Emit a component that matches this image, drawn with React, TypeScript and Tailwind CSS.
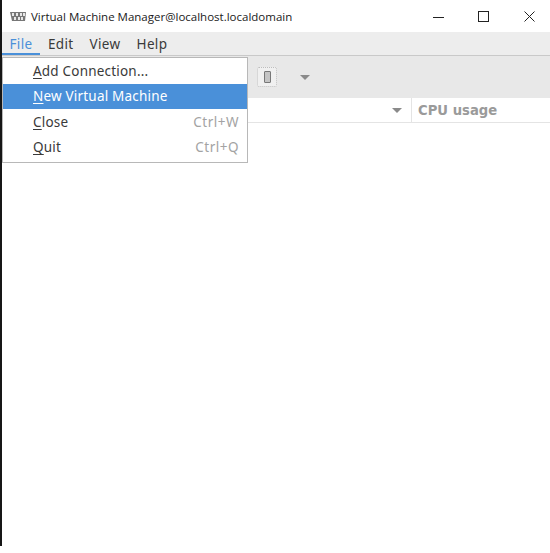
const menus = [
  { label: "File", active: true },
  { label: "Edit" },
  { label: "View" },
  { label: "Help" },
];

const fileItems = [
  { key: "A", rest: "dd Connection...", hint: "" },
  { key: "N", rest: "ew Virtual Machine", hint: "", selected: true },
  { key: "C", rest: "lose", hint: "Ctrl+W" },
  { key: "Q", rest: "uit", hint: "Ctrl+Q" },
];

function AppIcon() {
  return (
    <svg width="16" height="9" viewBox="0 0 16 9">
      <path d="M0 0h16l-1 9H2z" fill="#777" />
      <path d="M2 1h2v3H2zM6 1h2v3H6zM10 1h2v3h-2zM13 1h2v3h-2zM4 5h2v3H4zM8 5h2v3H8zM11 5h2v3h-2z" fill="#e8e8e8" />
    </svg>
  );
}

function WindowControls() {
  return (
    <div className="flex items-center pr-[15px]">
      <svg width="11" height="11" viewBox="0 0 11 11" stroke="#222" fill="none">
        <path d="M0 6.5h11" />
      </svg>
      <svg className="ml-[34px]" width="11" height="11" viewBox="0 0 11 11" stroke="#222" fill="none">
        <rect x="0.5" y="0.5" width="10" height="10" />
      </svg>
      <svg className="ml-[35px]" width="11" height="11" viewBox="0 0 11 11" stroke="#222" fill="none">
        <path d="M0.5 0.5l10 10M10.5 0.5l-10 10" />
      </svg>
    </div>
  );
}

function Caret() {
  return <div className="h-0 w-0 border-x-[5px] border-t-[5px] border-x-transparent border-t-[#8a8a8a]" />;
}

export default function App() {
  return (
    <div className="relative flex h-[553px] w-[550px] overflow-hidden bg-white font-['Noto_Sans',sans-serif]">
      <div className="mb-[7px] w-[2px] shrink-0 bg-[#161616]" />

      <div className="flex min-w-0 flex-1 flex-col">
        <div className="flex h-[32px] shrink-0 items-center bg-white pl-[8px] font-['Open_Sans',sans-serif] text-[11.5px] text-[#1a1a1a]">
          <AppIcon />
          <span className="ml-[5px] flex-1 pt-[1px]">Virtual Machine Manager@localhost.localdomain</span>
          <WindowControls />
        </div>

        <div className="flex h-[24px] shrink-0 items-stretch border-b border-[#c9c9c9] bg-[#ededed] text-[13.5px] tracking-[0.35px] text-[#3a3a3a]">
          {menus.map((menu) => (
            <div
              key={menu.label}
              className={
                menu.active
                  ? "flex w-[38px] items-center justify-center border-b-2 border-[#4a90d9] pt-[3px] text-[#4a90d9]"
                  : "flex items-center px-[8px] pt-[1px]"
              }
            >
              {menu.label}
            </div>
          ))}
        </div>

        <div className="flex h-[42px] shrink-0 items-center bg-[#e8e8e8] pl-[255px]">
          <div className="flex h-[20px] w-[20px] items-center justify-center rounded-[2px] border border-dotted border-[#bdbdbd] bg-[#f0f0f0]">
            <div className="h-[12px] w-[7px] rounded-[1px] border border-[#777] bg-[#c4c4c4]" />
          </div>
          <div className="ml-[23px]">
            <Caret />
          </div>
        </div>

        <div className="flex h-[25px] shrink-0 items-stretch border-b border-[#e4e4e4] bg-white">
          <div className="flex w-[410px] items-center justify-end border-r border-[#e4e4e4] pr-[9px] pt-[1px]">
            <Caret />
          </div>
          <div className="flex items-center pl-[6px] pt-[2px] font-['DejaVu_Sans',sans-serif] text-[13.2px] font-bold text-[#9a9a9a]">
            CPU usage
          </div>
        </div>

        <div className="flex-1 bg-white" />
      </div>

      <div className="absolute left-[2px] top-[57px] w-[246px] border border-[#b8b8b8] bg-white pb-[2px] text-[13.5px] tracking-[0.2px] text-[#3a3a3a]">
        {fileItems.map((item) => (
          <div
            key={item.key}
            className={
              item.selected
                ? "flex h-[25.5px] items-center justify-between bg-[#4a90d9] pl-[30px] pr-[8px] text-white"
                : "flex h-[25.5px] items-center justify-between pl-[30px] pr-[8px]"
            }
          >
            <span>
              <span className="underline underline-offset-2">{item.key}</span>
              {item.rest}
            </span>
            <span className="tracking-[0.5px] text-[#a3a3a3]">{item.hint}</span>
          </div>
        ))}
      </div>
    </div>
  );
}
